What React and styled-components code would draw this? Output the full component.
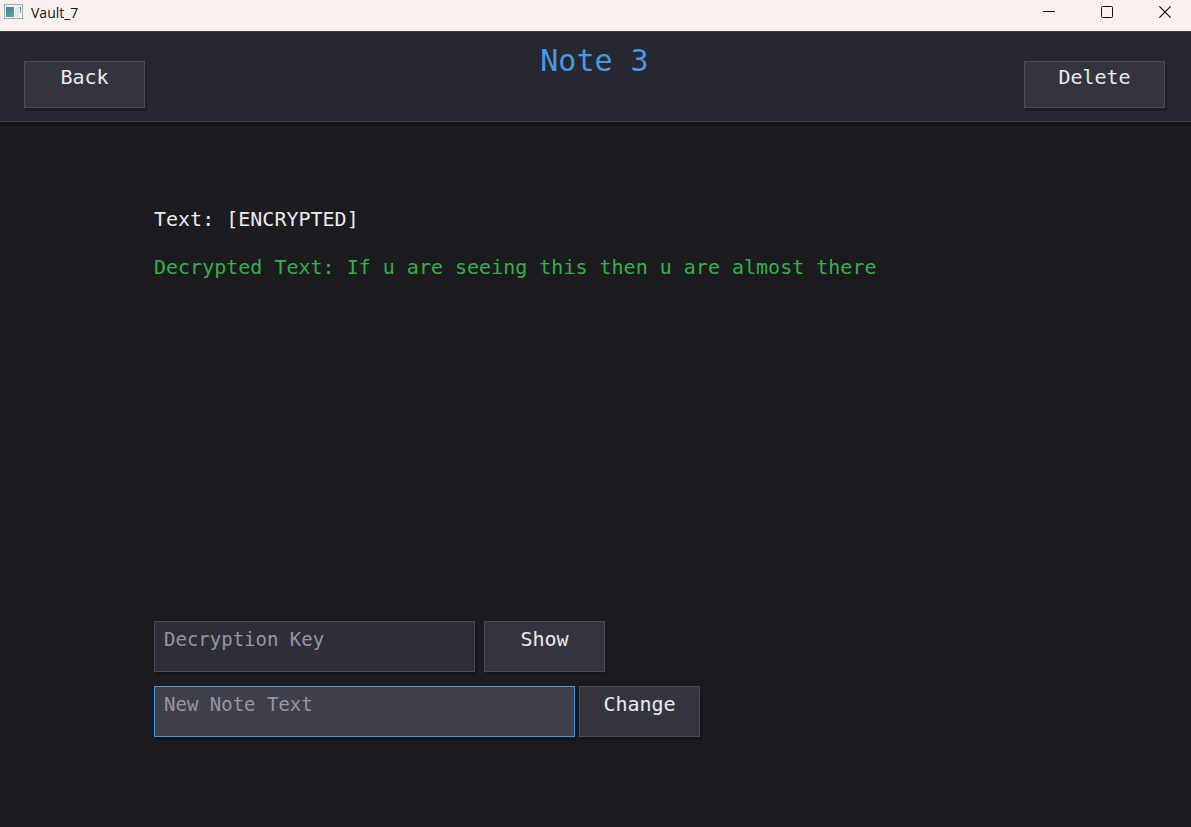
import React from "react";
import styled, { createGlobalStyle } from "styled-components";

const GlobalStyle = createGlobalStyle`
  *, *::before, *::after { box-sizing: border-box; }
  body {
    margin: 0;
    background: #1c1b1f;
    color: #ebebf0;
    font-family: "DejaVu Sans Mono", "Liberation Mono", monospace;
  }
`;

const Window = styled.div`
  display: flex;
  flex-direction: column;
  min-height: 100vh;
`;

const TitleBar = styled.div`
  display: flex;
  align-items: flex-start;
  height: 31px;
  padding-left: 4px;
  background: #f9f1ef;
  color: #111;
  font-family: "Open Sans", "Noto Sans", sans-serif;
`;

const AppIcon = styled.svg`
  width: 19px;
  height: 16px;
  margin-top: 4px;
`;

const WindowTitle = styled.span`
  flex: 1;
  padding-left: 8px;
  font-size: 14px;
  line-height: 26px;
`;

const WindowButtons = styled.div`
  display: flex;
  gap: 6px;
`;

const WindowButton = styled.button`
  display: flex;
  justify-content: center;
  align-items: center;
  width: 52px;
  height: 24px;
  padding: 0;
  border: 0;
  background: none;
  color: #111;
`;

const Header = styled.header`
  display: grid;
  grid-template-columns: 1fr auto 1fr;
  align-items: start;
  height: 91px;
  padding: 0 26px 0 24px;
  background: #26272f;
  border-top: 1px solid #3b3c42;
  border-bottom: 1px solid #3f3f45;
  box-shadow: 0 5px 0 #15141a;
`;

const Title = styled.h1`
  margin: 11px 0 0;
  color: #4a97e3;
  font-size: 30px;
  font-weight: 400;
  line-height: 36px;
`;

const Button = styled.button`
  width: ${(p) => (p.$wide ? 141 : 121)}px;
  height: ${(p) => (p.$tall ? 51 : 47)}px;
  margin-top: ${(p) => (p.$header ? 29 : 0)}px;
  justify-self: ${(p) => p.$align || "start"};
  padding: ${(p) => (p.$tall ? 5 : 3)}px 0 0;
  display: flex;
  align-items: flex-start;
  justify-content: center;
  background: #34343f;
  border: 1px solid #4b4b55;
  box-shadow: 2px 3px 0 ${(p) => (p.$header ? "#1e1f25" : "#16161a")};
  color: #ebebf0;
  font: 20px/24px "DejaVu Sans Mono", "Liberation Mono", monospace;
`;

const Main = styled.main`
  flex: 1;
  display: flex;
  flex-direction: column;
  justify-content: space-between;
  padding: 85px 154px 90px;
`;

const Note = styled.section`
  display: flex;
  flex-direction: column;
  gap: 24px;
`;

const Line = styled.p`
  margin: 0;
  color: ${(p) => (p.$decrypted ? "#33b04a" : "#ebebf0")};
  font-size: 20px;
  line-height: 24px;
`;

const Form = styled.form`
  display: flex;
  flex-direction: column;
  gap: 14px;
`;

const Row = styled.div`
  display: flex;
  gap: ${(p) => p.$gap}px;
`;

const Field = styled.input`
  width: ${(p) => (p.$active ? 421 : 321)}px;
  height: 51px;
  padding: 0 9px 16px;
  background: ${(p) => (p.$active ? "#40404b" : "#2e2e38")};
  border: 1px solid ${(p) => (p.$active ? "#4a97e3" : "#4b4b55")};
  border-radius: 0;
  outline: 0;
  box-shadow: 2px 3px 0 #16161a;
  color: #ebebf0;
  font: 19px/24px "DejaVu Sans Mono", "Liberation Mono", monospace;
  &::placeholder { color: #9696a3; opacity: 1; }
`;

export default function App() {
  return (
    <>
      <GlobalStyle />
      <Window>
        <TitleBar>
          <AppIcon viewBox="0 0 19 16" aria-hidden="true" shapeRendering="crispEdges">
            <defs>
              <linearGradient id="pane" x1="0" y1="0" x2="1" y2="1">
                <stop offset="0" stopColor="#4779a8" />
                <stop offset="1" stopColor="#58b580" />
              </linearGradient>
            </defs>
            <rect x="0.5" y="0.5" width="18" height="14" fill="#f1f3f4" stroke="#a3a9ad" />
            <rect x="2" y="3" width="8" height="10" fill="url(#pane)" />
            <rect x="11" y="3" width="4" height="10" fill="#e3e6e8" />
            <rect x="16" y="3" width="1" height="3" fill="#4779a8" />
            <rect x="16" y="6" width="1" height="3" fill="#58b580" />
          </AppIcon>
          <WindowTitle>Vault_7</WindowTitle>
          <WindowButtons>
            <WindowButton type="button" aria-label="Minimize">
              <svg width="12" height="12" viewBox="0 0 12 12"><path d="M0 5.5H12" stroke="currentColor" /></svg>
            </WindowButton>
            <WindowButton type="button" aria-label="Maximize">
              <svg width="12" height="12" viewBox="0 0 12 12" fill="none"><rect x="0.5" y="0.5" width="11" height="11" rx="1" stroke="currentColor" /></svg>
            </WindowButton>
            <WindowButton type="button" aria-label="Close">
              <svg width="12" height="12" viewBox="0 0 12 12"><path d="M0.3 0.3L11.7 11.7M11.7 0.3L0.3 11.7" stroke="currentColor" strokeWidth="1.2" /></svg>
            </WindowButton>
          </WindowButtons>
        </TitleBar>
        <Header>
          <Button type="button" $header>Back</Button>
          <Title>Note 3</Title>
          <Button type="button" $header $wide $align="end">Delete</Button>
        </Header>
        <Main>
          <Note>
            <Line>Text: [ENCRYPTED]</Line>
            <Line $decrypted>Decrypted Text: If u are seeing this then u are almost there</Line>
          </Note>
          <Form onSubmit={(e) => e.preventDefault()}>
            <Row $gap={9}>
              <Field type="text" aria-label="Decryption Key" placeholder="Decryption Key" />
              <Button type="submit" $tall>Show</Button>
            </Row>
            <Row $gap={4}>
              <Field type="text" aria-label="New Note Text" placeholder="New Note Text" $active />
              <Button type="button" $tall>Change</Button>
            </Row>
          </Form>
        </Main>
      </Window>
    </>
  );
}
